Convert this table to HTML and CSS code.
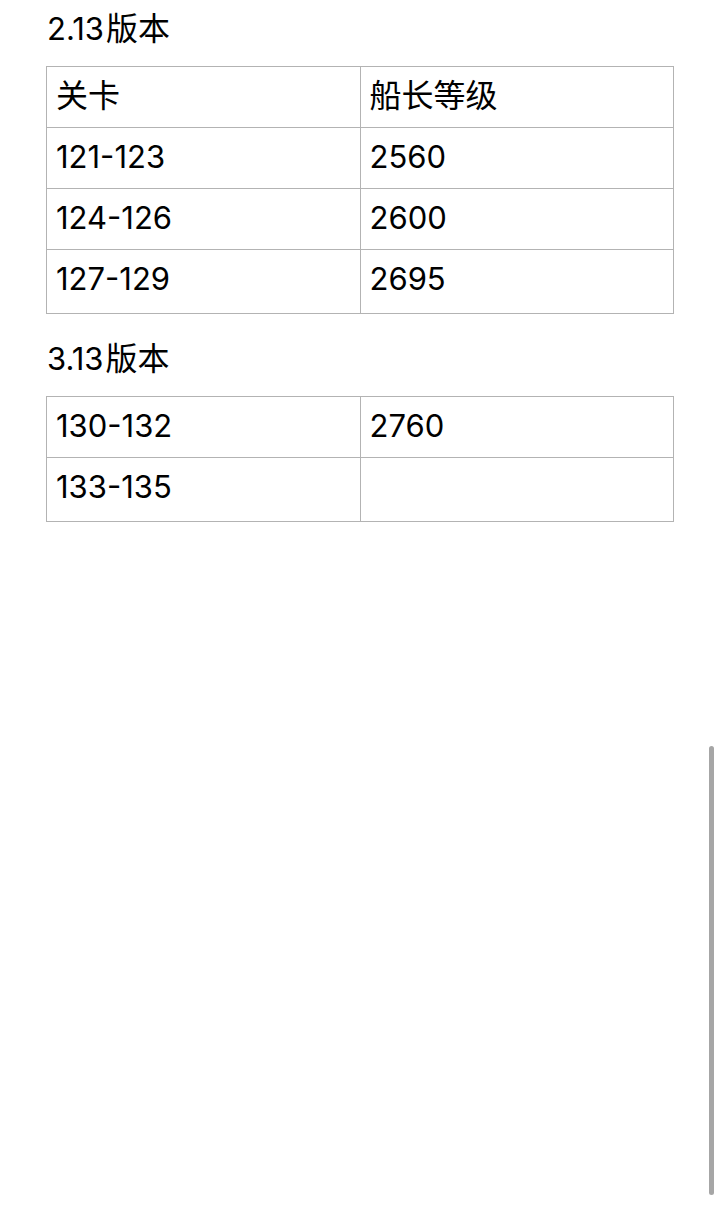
FILE: index.html
```html
<!DOCTYPE html>
<html lang="zh">
<head>
<meta charset="utf-8">
<link rel="stylesheet" href="styles.css">
</head>
<body>
<main class="page">
  <h2 class="version">2.13<span class="cjk">版本</span></h2>
  <table class="levels">
    <tr><td><span class="cjk">关卡</span></td><td><span class="cjk">船长等级</span></td></tr>
    <tr><td>121-123</td><td>2560</td></tr>
    <tr><td>124-126</td><td>2600</td></tr>
    <tr><td>127-129</td><td>2695</td></tr>
  </table>
  <h2 class="version">3.13<span class="cjk">版本</span></h2>
  <table class="levels">
    <tr><td>130-132</td><td>2760</td></tr>
    <tr><td>133-135</td><td></td></tr>
  </table>
</main>
<div class="scrollbar"></div>
</body>
</html>
```
FILE: styles.css
```css
html, body {
  margin: 0;
  padding: 0;
  background: #ffffff;
}
body {
  font-family: Inter, "Noto Sans CJK SC", sans-serif;
  color: #000000;
  width: 720px;
  height: 1228px;
  overflow: hidden;
}
.page {
  padding: 9px 0 0 46px;
}
.cjk {
  font-family: "Noto Sans CJK SC", sans-serif;
  font-size: 32px;
  line-height: 20px;
}
.version {
  margin: 0 0 17px 1px;
  font-size: 31px;
  font-weight: normal;
  line-height: 40px;
  height: 40px;
}
.version .cjk {
  margin-left: 2px;
}
.levels {
  border-collapse: collapse;
  width: 628px;
  table-layout: fixed;
  margin-bottom: 25px;
}
.levels td {
  border: 1px solid #b3b3b3;
  padding: 14px 9px 16px 9px;
  font-size: 31px;
  line-height: 30px;
  height: 30px;
  vertical-align: top;
}
.levels tr:last-child td {
  padding-bottom: 19px;
}
.scrollbar {
  position: fixed;
  left: 709px;
  top: 746px;
  width: 5px;
  height: 449px;
  border-radius: 3px;
  background: #a6a6a6;
}
```
